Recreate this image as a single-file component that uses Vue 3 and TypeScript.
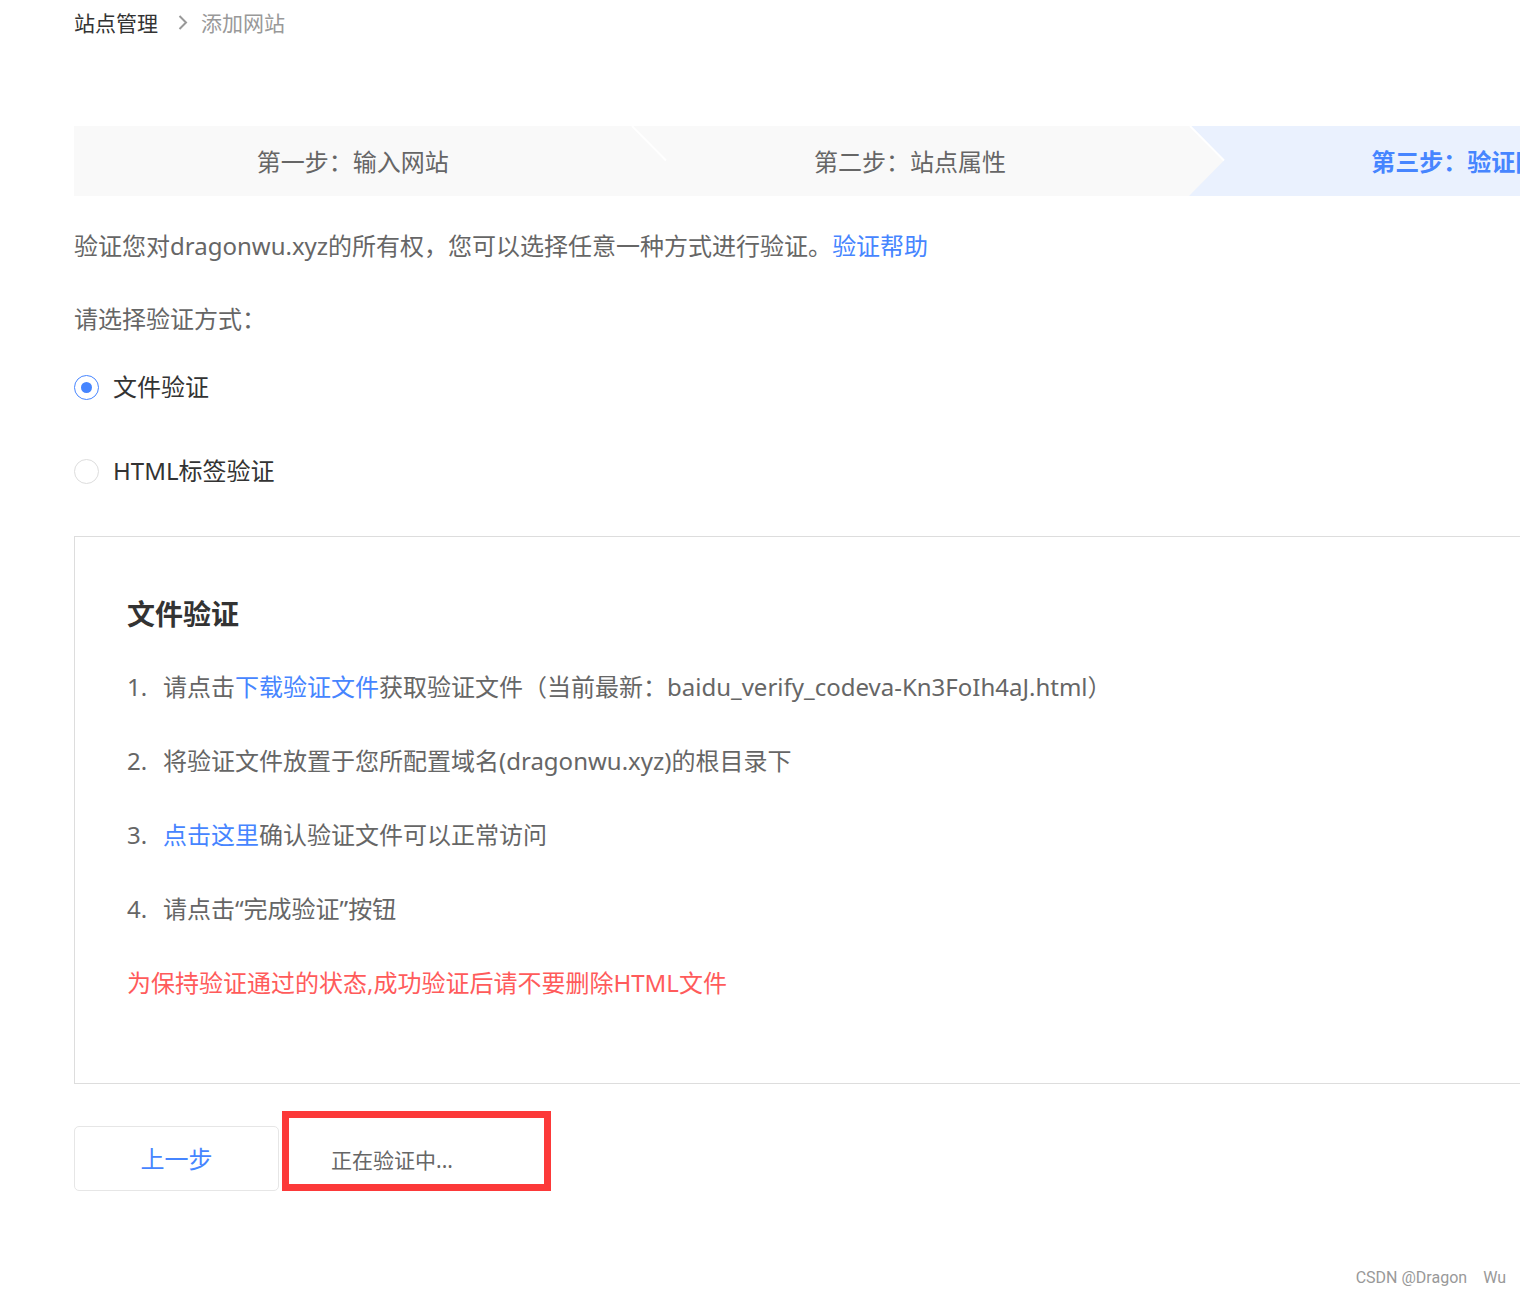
<script setup lang="ts">
import { ref } from 'vue'

interface Step {
  label: string
  active: boolean
}

interface Method {
  value: string
  label: string
}

const steps: Step[] = [
  { label: '第一步：输入网站', active: false },
  { label: '第二步：站点属性', active: false },
  { label: '第三步：验证网站', active: true },
]

const methods: Method[] = [
  { value: 'file', label: '文件验证' },
  { value: 'html', label: 'HTML标签验证' },
]

const domain = 'dragonwu.xyz'
const verifyFile = 'baidu_verify_codeva-Kn3FoIh4aJ.html'
const method = ref('file')
</script>

<template>
  <div class="page">
    <main class="content">
      <nav class="crumbs">
        <a href="#" class="crumb-link">站点管理</a>
        <svg class="crumb-arrow" viewBox="0 0 10 16" aria-hidden="true">
          <path d="M1.5 2 L8 8.5 L1.5 15" fill="none" stroke="#999" stroke-width="2" />
        </svg>
        <span class="crumb-current">添加网站</span>
      </nav>

      <ol class="steps">
        <li v-for="(step, i) in steps" :key="step.label" class="step" :class="{ active: step.active }">
          {{ step.label }}
          <svg v-if="i < steps.length - 1" class="step-arrow" viewBox="0 0 36 70" aria-hidden="true">
            <path d="M0 0 L1 0 L35 34.5 L0 70 Z" fill="#f9f9f9" />
            <path d="M1 0 L35 34.5" fill="none" stroke="#fff" stroke-width="2" />
          </svg>
        </li>
      </ol>

      <p class="text">验证您对{{ domain }}的所有权，您可以选择任意一种方式进行验证。<a href="#">验证帮助</a></p>

      <fieldset class="methods">
        <legend class="text legend">请选择验证方式：</legend>
        <label v-for="m in methods" :key="m.value" class="method">
          <input v-model="method" type="radio" name="method" :value="m.value" />
          <span>{{ m.label }}</span>
        </label>
      </fieldset>

      <section class="panel">
        <h2>文件验证</h2>
        <ol class="guide">
          <li><span class="num">1.</span><span>请点击<a href="#">下载验证文件</a>获取验证文件（当前最新：{{ verifyFile }}）</span></li>
          <li><span class="num">2.</span><span>将验证文件放置于您所配置域名({{ domain }})的根目录下</span></li>
          <li><span class="num">3.</span><span><a href="#">点击这里</a>确认验证文件可以正常访问</span></li>
          <li><span class="num">4.</span><span>请点击“完成验证”按钮</span></li>
        </ol>
        <p class="warning">为保持验证通过的状态,成功验证后请不要删除HTML文件</p>
      </section>

      <div class="actions">
        <button type="button" class="back">上一步</button>
        <div class="status" role="status">正在验证中...</div>
      </div>
    </main>
    <div class="watermark">CSDN @Dragon&#x3000;Wu</div>
  </div>
</template>

<style>
body {
  margin: 0;
  background: #fff;
}
</style>

<style scoped>
.page {
  position: relative;
  box-sizing: border-box;
  min-height: 100vh;
  overflow: hidden;
  padding-left: 74px;
  font-family: "Noto Sans", "Noto Sans CJK SC", sans-serif;
  font-size: 24px;
  line-height: 48px;
  color: #666;
}

/* The wizard is laid out wider than the viewport and runs off its right edge. */
.content {
  width: 110vw;
}

a {
  color: #4685ff;
  text-decoration: none;
}

.crumbs {
  display: flex;
  align-items: center;
  height: 44px;
  font-family: "Noto Sans CJK SC", sans-serif;
  font-size: 21px;
}

.crumb-link {
  color: #333;
}

.crumb-arrow {
  width: 10px;
  height: 16px;
  margin: 0 13px 0 20px;
}

.crumb-current {
  color: #999;
}

.steps {
  display: flex;
  margin: 82px 0 26px;
  padding: 0;
  list-style: none;
}

.step {
  position: relative;
  flex: 1;
  height: 70px;
  line-height: 72px;
  text-align: center;
  background: #f9f9f9;
}

.step.active {
  background: #eaf1fe;
  color: #4685ff;
  font-weight: 700;
}

.step-arrow {
  position: absolute;
  z-index: 1;
  top: 0;
  left: 100%;
  width: 36px;
  height: 70px;
}

.text {
  margin: 0;
}

.methods {
  margin: 25px 0 0;
  padding: 0;
  border: 0;
}

.legend {
  padding: 0;
}

.method {
  display: flex;
  align-items: center;
  width: max-content;
  gap: 14px;
  margin-top: 36px;
  color: #333;
}

.legend + .method {
  margin-top: 20px;
}

.method input {
  appearance: none;
  display: grid;
  place-items: center;
  box-sizing: border-box;
  width: 25px;
  height: 25px;
  margin: 0;
  border: 1px solid #ddd;
  border-radius: 50%;
  background: #fff;
}

.method input:checked {
  border-color: #4685ff;
}

.method input:checked::before {
  content: "";
  width: 11px;
  height: 11px;
  border-radius: 50%;
  background: #4685ff;
}

.panel {
  box-sizing: border-box;
  margin-top: 41px;
  padding: 53px 52px 76px;
  border: 1px solid #ddd;
}

h2 {
  margin: 0 0 25px;
  font-size: 28px;
  line-height: 48px;
  color: #333;
}

.guide {
  margin: 0;
  padding: 0;
  list-style: none;
}

.guide li {
  display: flex;
  margin-bottom: 26px;
}

.num {
  width: 36px;
}

.warning {
  margin: 0;
  color: #ff5b5b;
}

.actions {
  display: flex;
  align-items: flex-end;
  gap: 3px;
  margin-top: 27px;
}

.back {
  box-sizing: border-box;
  width: 205px;
  height: 65px;
  padding: 0;
  border: 1px solid #e6e6e6;
  border-radius: 5px;
  background: #fff;
  color: #4685ff;
  font: inherit;
}

.status {
  box-sizing: border-box;
  width: 269px;
  height: 80px;
  padding: 18px 42px 0;
  border: 7px solid #fc3939;
  font-size: 21px;
}

.watermark {
  position: absolute;
  right: 14px;
  bottom: 8px;
  font-family: Roboto, "Noto Sans CJK SC", sans-serif;
  font-size: 16px;
  line-height: 22px;
  color: #999;
}
</style>
